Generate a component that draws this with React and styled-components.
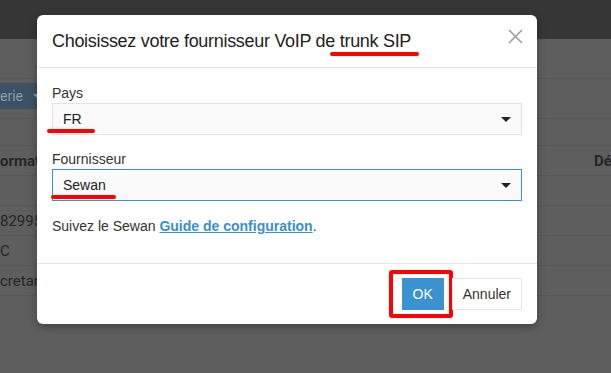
import React from 'react';
import styled, { createGlobalStyle } from 'styled-components';

const GlobalStyle = createGlobalStyle`
  html, body {
    margin: 0;
    padding: 0;
  }
  body {
    background: #5e5e5e;
    font-family: "Liberation Sans", Arial, sans-serif;
  }
`;

// BACKGROUND PAGE (already dimmed by the modal backdrop)
const Page = styled.div`
  position: relative;
  width: 611px;
  height: 373px;
  background: #5e5e5e;
  overflow: hidden;
  font-family: Roboto, "Liberation Sans", sans-serif;
  color: #262626;
`;

const TopBar = styled.div`
  height: 39px;
  background: #363636;
`;

const SubHeader = styled.div`
  height: 39px;
  border-bottom: 1px solid #575757;
`;

const Toolbar = styled.div`
  height: 35px;
  padding-top: 4px;
  border-bottom: 1px solid #575757;
`;

const DropButton = styled.div`
  display: inline-flex;
  align-items: center;
  gap: 10px;
  height: 26px;
  padding-right: 20px;
  background: #3b5266;
  color: #8c9cab;
  font-size: 14px;
`;

const Caret = styled.span`
  width: 0;
  height: 0;
  border-left: ${(props) => props.size}px solid transparent;
  border-right: ${(props) => props.size}px solid transparent;
  border-top: ${(props) => props.size}px solid ${(props) => props.color};
`;

const Row = styled.div`
  display: grid;
  grid-template-columns: 594px auto;
  align-items: center;
  height: ${(props) => props.h || 29}px;
  border-bottom: 1px solid #575757;
  font-size: 15px;
  font-weight: ${(props) => (props.head ? 700 : 400)};
  white-space: nowrap;
`;

// MODAL
const Modal = styled.div`
  position: absolute;
  top: 15px;
  left: 37px;
  width: 500px;
  background: #fff;
  border-radius: 6px;
  box-shadow: 0 3px 9px rgba(0, 0, 0, 0.3);
  color: #333;
  font-family: "Liberation Sans", Arial, sans-serif;
`;

const Header = styled.div`
  display: flex;
  justify-content: space-between;
  align-items: flex-start;
  padding: 15px 14px 14px 15px;
  border-bottom: 1px solid #e5e5e5;
`;

const Title = styled.h4`
  margin: 0;
  font-size: 18px;
  font-weight: 400;
  line-height: 23px;
  letter-spacing: -0.3px;
  color: #222;
`;

const Marked = styled.span`
  position: relative;
  &::after {
    content: '';
    position: absolute;
    left: ${(props) => props.l}px;
    right: ${(props) => props.r}px;
    bottom: ${(props) => props.b}px;
    height: 4px;
    border-radius: 2px;
    background: #ff0000;
  }
`;

const Close = styled.button`
  margin-top: -1px;
  padding: 0;
  border: 0;
  background: none;
  line-height: 0;
  cursor: pointer;
`;

const Body = styled.div`
  padding: 15px 15px 27px;
`;

const Label = styled.div`
  font-size: 14px;
  line-height: 20px;
  color: #333;
`;

const Select = styled.div`
  display: flex;
  align-items: center;
  justify-content: space-between;
  box-sizing: border-box;
  height: 32px;
  margin-bottom: ${(props) => props.mb}px;
  padding: 0 10px;
  background: #fafafa;
  border: 1px solid ${(props) => (props.focused ? '#3a93d0' : '#e3e3e3')};
  font-size: 14px;
  color: #222;
`;

const Help = styled.p`
  margin: 15px 0 0;
  font-size: 14px;
  line-height: 20px;
  color: #333;
`;

const Link = styled.a`
  color: #3a8fcd;
  font-weight: 700;
  text-decoration: underline;
`;

const Footer = styled.div`
  display: flex;
  justify-content: flex-end;
  gap: 8px;
  padding: 14px 15px;
  border-top: 1px solid #e5e5e5;
`;

const Button = styled.button`
  position: relative;
  height: 32px;
  padding: 0 10px;
  border: 1px solid ${(props) => (props.primary ? '#3a93d0' : '#e5e5e5')};
  background: ${(props) => (props.primary ? '#3a93d0' : '#fff')};
  color: ${(props) => (props.primary ? '#fff' : '#333')};
  font-family: "Liberation Sans", Arial, sans-serif;
  font-size: 14px;
  border-radius: 0;
  cursor: pointer;
  ${(props) =>
    props.highlighted &&
    `
    &::after {
      content: '';
      position: absolute;
      left: -14px;
      right: -10px;
      top: -9px;
      bottom: -9px;
      border: 4px solid #ff0000;
      border-radius: 3px;
    }
  `}
`;

const App = () => {
  return (
    <>
      <GlobalStyle />
      <Page>
        <TopBar />
        <SubHeader />
        <Toolbar>
          <DropButton>
            erie
            <Caret size={5} color="#8c9cab" />
          </DropButton>
        </Toolbar>
        <Row h={26}>
          <span />
          <span />
        </Row>
        <Row head>
          <span>ormat</span>
          <span>Dé</span>
        </Row>
        <Row>
          <span />
          <span />
        </Row>
        <Row>
          <span>829950</span>
          <span />
        </Row>
        <Row>
          <span>C</span>
          <span />
        </Row>
        <Row>
          <span>cretari</span>
          <span />
        </Row>

        <Modal>
          <Header>
            <Title>
              Choisissez votre fournisseur VoIP de{' '}
              <Marked l={-10} r={-8} b={-5}>trunk SIP</Marked>
            </Title>
            <Close aria-label="Fermer">
              <svg width="15" height="15" viewBox="0 0 15 15">
                <path d="M1 1 L14 14 M14 1 L1 14" stroke="#999" strokeWidth="1.5" fill="none" />
              </svg>
            </Close>
          </Header>
          <Body>
            <Label>Pays</Label>
            <Select mb={14}>
              <Marked l={-16} r={-13} b={-6}>FR</Marked>
              <Caret size={5} color="#222" />
            </Select>
            <Label>Fournisseur</Label>
            <Select focused mb={0}>
              <Marked l={-12} r={-10} b={-6}>Sewan</Marked>
              <Caret size={5} color="#222" />
            </Select>
            <Help>
              Suivez le Sewan <Link href="#">Guide de configuration</Link>.
            </Help>
          </Body>
          <Footer>
            <Button primary highlighted>OK</Button>
            <Button>Annuler</Button>
          </Footer>
        </Modal>
      </Page>
    </>
  );
};

export default App;
